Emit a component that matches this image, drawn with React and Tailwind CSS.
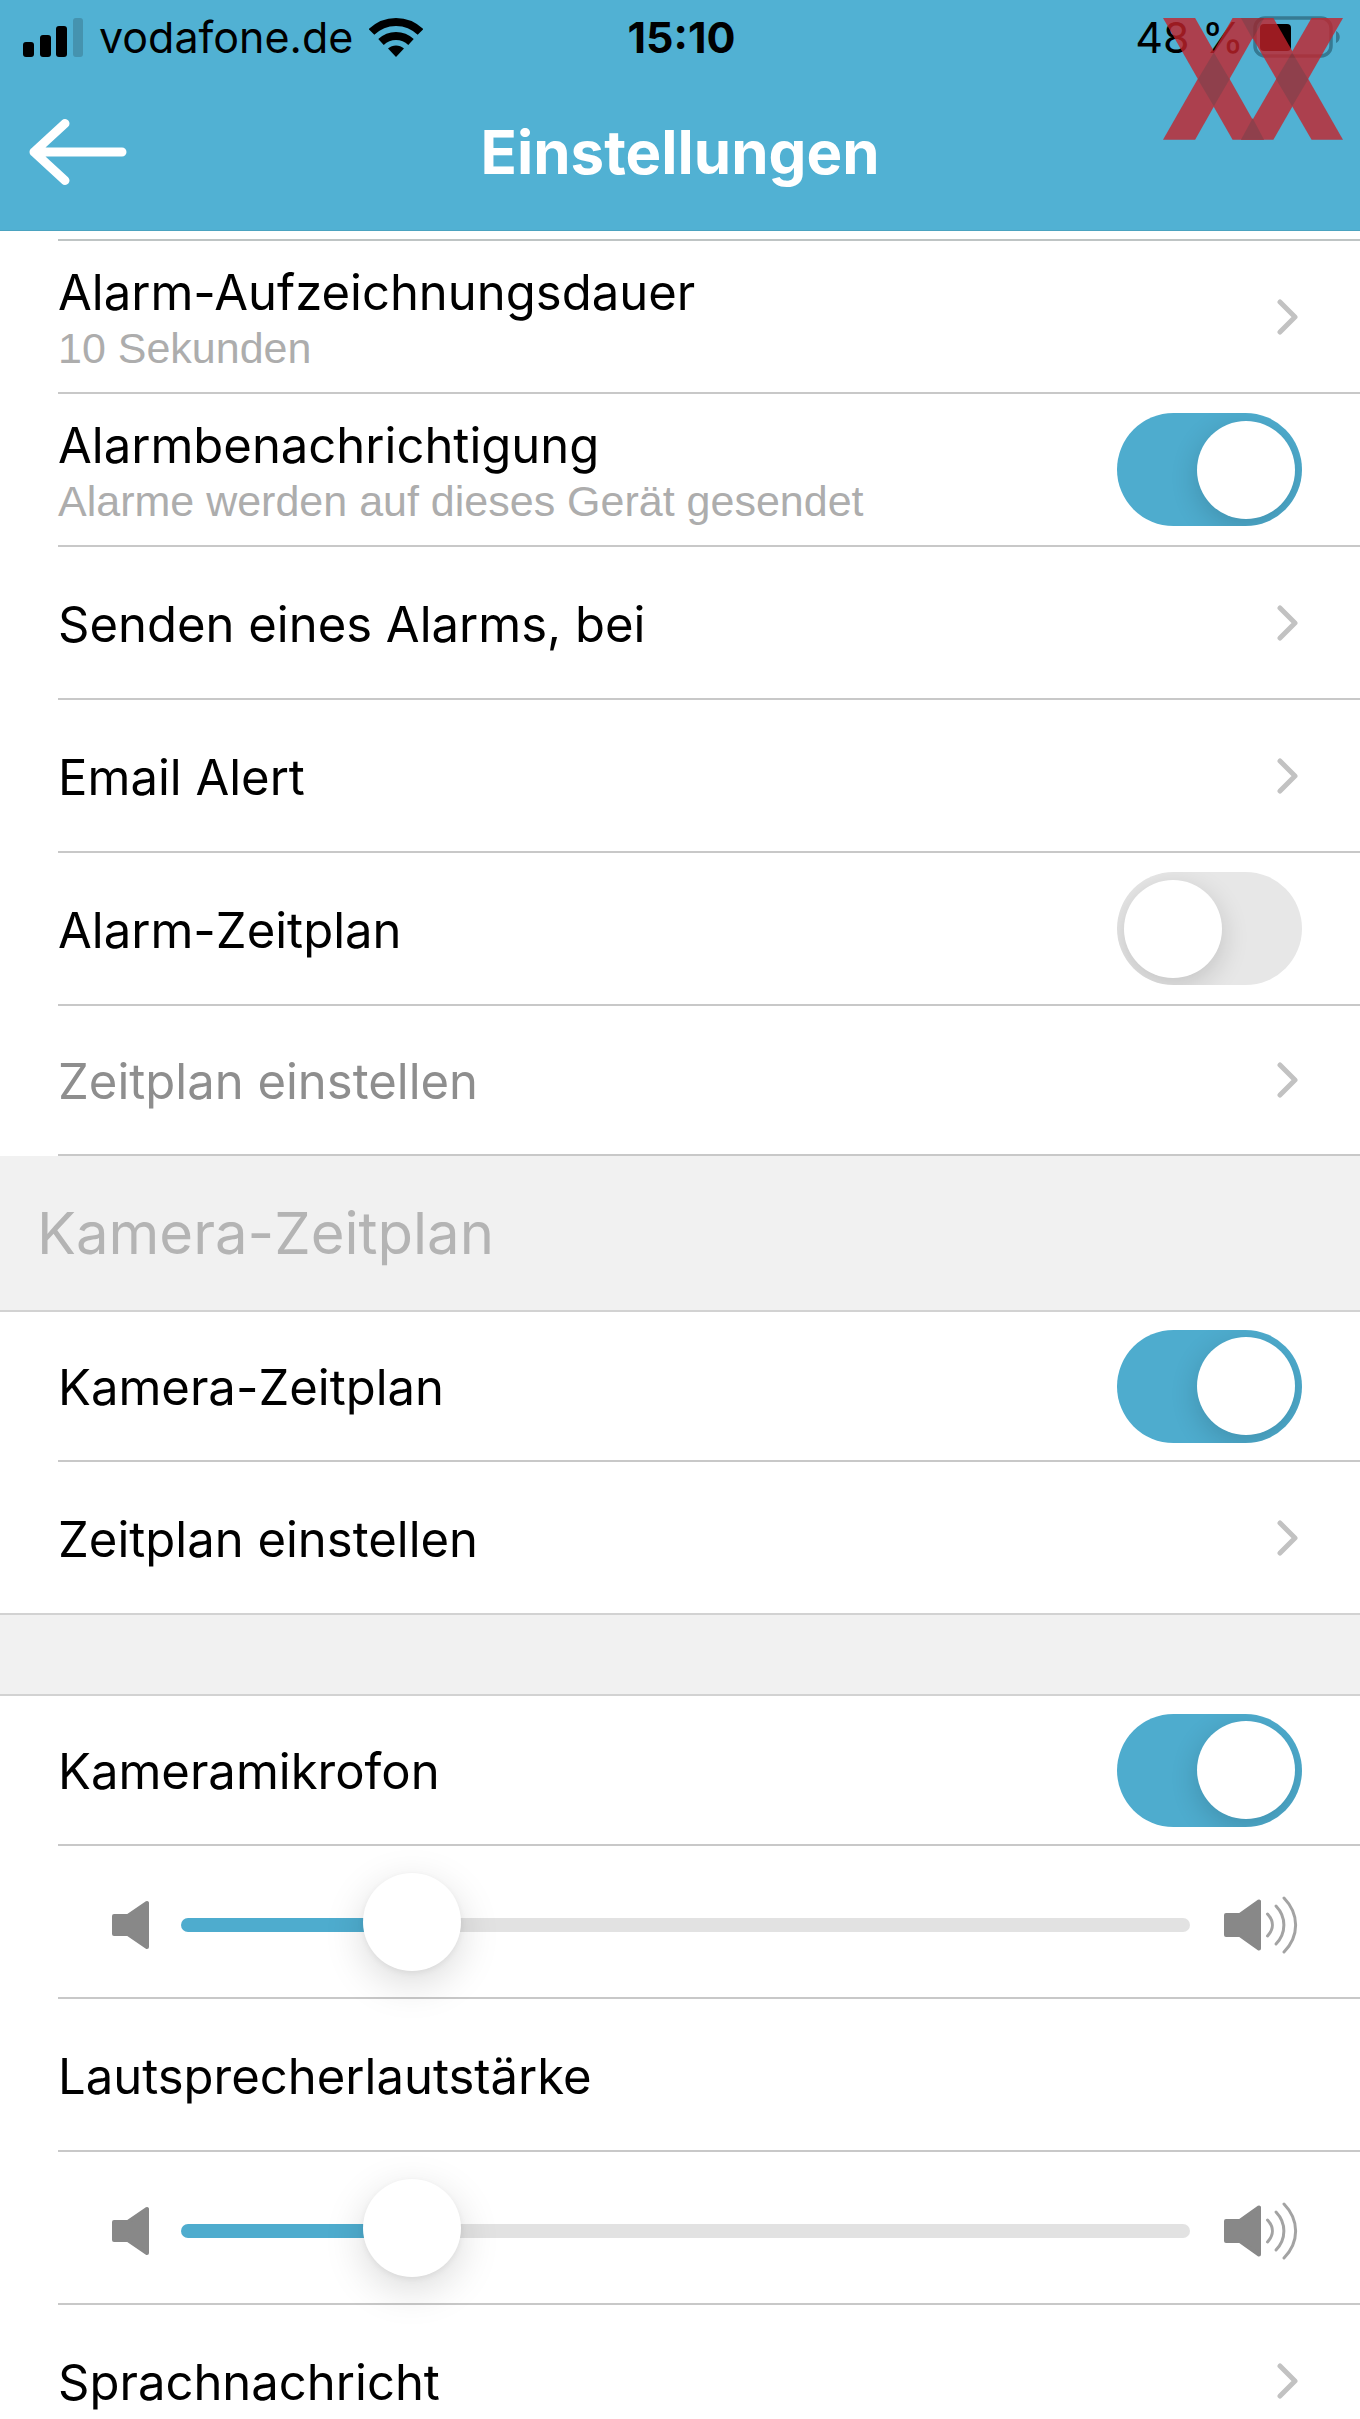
import React, { useState } from 'react'

const SignalBars = () => (
  <svg width="60" height="39" viewBox="0 0 60 39" aria-hidden="true">
    <rect x="0" y="24" width="11" height="15" rx="3" />
    <rect x="17" y="17" width="11" height="22" rx="3" />
    <rect x="33" y="8" width="11" height="31" rx="3" />
    <rect x="50" y="0" width="10" height="39" rx="3" fill="#4593af" />
  </svg>
)

const WifiIcon = () => (
  <svg width="54" height="40" viewBox="0 0 54 40" fill="none" stroke="#000" aria-hidden="true">
    <path d="M2.5 15 C16 1.500 38 1.500 51.500 15" strokeWidth="8" />
    <path d="M12 25 C20.500 17 33.500 17 42 25" strokeWidth="8" />
    <path d="M27 40 L19 31.500 C23.500 27.500 30.500 27.500 35 31.500 Z" fill="#000" stroke="none" />
  </svg>
)

const BatteryIcon = () => (
  <svg width="87" height="42" viewBox="0 0 87 42" aria-hidden="true">
    <rect x="2" y="2" width="76" height="38" rx="10" fill="none" stroke="#367a93" strokeWidth="3.500" />
    <rect x="7" y="8" width="31" height="27" rx="4" />
    <path d="M83 15 C88 17 88 25 83 27 Z" fill="#367a93" />
  </svg>
)

const Logo = () => (
  <svg className="w-[180px]" viewBox="190 54 538 364" aria-hidden="true">
    <g opacity="0.79">
      <g fill="#c5232b">
        <path d="M190 54H286L492 418H398Z" />
        <path d="M398 54H492L286 418H190Z" />
        <path d="M423 54H520L728 418H634Z" />
        <path d="M634 54H728L520 418H423Z" />
      </g>
      <g fill="#a02329">
        <path d="M342 157L389 237L342 318L294 237Z" />
        <path d="M576 157L624 237L576 318L528 237Z" />
        <path d="M458 354L492 418H423Z" />
        <path d="M423 54H492L458 117Z" />
      </g>
    </g>
  </svg>
)

const BackArrow = () => (
  <svg width="98" height="66" viewBox="0 0 98 66" fill="none" stroke="#fff" strokeWidth="9" strokeLinecap="round" strokeLinejoin="round" aria-hidden="true">
    <path d="M36 4.500L5 33L36 61.500M5 33H93" />
  </svg>
)

const Chevron = () => (
  <svg width="21" height="36" viewBox="0 0 21 36" fill="none" stroke="#c2c2c2" strokeWidth="5" strokeLinecap="round" strokeLinejoin="round" aria-hidden="true">
    <path d="M3 3L18 18L3 33" />
  </svg>
)

const SpeakerLow = () => (
  <svg width="38" height="50" viewBox="0 0 38 50" fill="#888" stroke="#888" strokeWidth="4" strokeLinejoin="round" aria-hidden="true">
    <path d="M2 16H16L35 3V47L16 34H2Z" />
  </svg>
)

const SpeakerHigh = () => (
  <svg width="74" height="58" viewBox="0 0 74 58" fill="none" stroke="#a3a3a3" strokeWidth="3" strokeLinecap="round" aria-hidden="true">
    <path d="M2 19H16L35 5.500V52.500L16 39H2Z" fill="#888" stroke="#888" strokeWidth="4" strokeLinejoin="round" />
    <path d="M43.500 18C50 25 50 33 43.500 40" />
    <path d="M52 10C62.500 21 62.500 37 52 48" />
    <path d="M60 2C75.500 18 75.500 40 60 56" />
  </svg>
)

const Labels = ({ title, subtitle, muted, id }) => (
  <span className={subtitle ? 'flex flex-col pt-2' : 'flex flex-col pt-1'}>
    <span id={id} className={muted ? 'text-[49px] leading-[54px] text-[#8e8e8e]' : 'text-[49px] leading-[54px]'}>{title}</span>
    {subtitle && (
      <span className="font-['Liberation_Sans',Arial,sans-serif] text-[43px] leading-[56px] text-[#adadad]">{subtitle}</span>
    )}
  </span>
)

const LinkRow = ({ title, subtitle, muted }) => (
  <button type="button" className="flex h-full w-full items-center justify-between pr-[62px] text-left">
    <Labels title={title} subtitle={subtitle} muted={muted} />
    <Chevron />
  </button>
)

const SwitchRow = ({ title, subtitle, initial, id }) => {
  const [on, setOn] = useState(initial)

  return (
    <label className="flex h-full w-full items-center justify-between pr-[58px]">
      <Labels title={title} subtitle={subtitle} id={id} />
      <input
        type="checkbox"
        role="switch"
        checked={on}
        onChange={(e) => setOn(e.target.checked)}
        className="flex h-[113px] w-[185px] shrink-0 appearance-none items-center overflow-hidden rounded-full bg-[#e7e7e7] px-[7px] before:h-[98px] before:w-[98px] before:rounded-full before:bg-white before:shadow-[0_8px_28px_rgba(0,0,0,0.16)] checked:justify-end checked:bg-[#4eacce]"
      />
    </label>
  )
}

const VolumeRow = ({ labelledBy, initial }) => {
  const [value, setValue] = useState(initial)

  return (
    <div className="flex h-full items-center pt-1.5 pr-[62px] pl-[54px]">
      <SpeakerLow />
      <input
        type="range"
        min="0"
        max="100"
        aria-labelledby={labelledBy}
        value={value}
        onChange={(e) => setValue(Number(e.target.value))}
        style={{ '--fill': `${value}%` }}
        className="relative mr-[34px] ml-[31px] h-[98px] min-w-0 flex-1 appearance-none bg-transparent [&::-webkit-slider-runnable-track]:h-[14px] [&::-webkit-slider-runnable-track]:rounded-full [&::-webkit-slider-runnable-track]:bg-[linear-gradient(to_right,#4eacce_var(--fill),#e2e2e2_var(--fill))] [&::-webkit-slider-thumb]:mt-[-45px] [&::-webkit-slider-thumb]:h-[98px] [&::-webkit-slider-thumb]:w-[98px] [&::-webkit-slider-thumb]:appearance-none [&::-webkit-slider-thumb]:rounded-full [&::-webkit-slider-thumb]:bg-white [&::-webkit-slider-thumb]:shadow-[0_12px_40px_rgba(0,0,0,0.15),0_2px_6px_rgba(0,0,0,0.06)]"
      />
      <SpeakerHigh />
    </div>
  )
}

// edge rows sit next to a grey band and are a little lower than the others
const Row = ({ edge, last, children }) => (
  <li className={`${edge ? 'h-[150px]' : 'h-[153px]'} ${last ? 'border-b-2 border-[#d2d2d2] pl-[58px]' : 'ml-[58px] border-b-2 border-[#c8c8c8]'}`}>
    {children}
  </li>
)

export default function App() {
  return (
    <div className="flex h-screen flex-col overflow-hidden bg-white font-['Inter',sans-serif] text-black">
      <header className="relative shrink-0 border-b border-[#4ba3c0] bg-[#51b1d3]">
        <div className="grid h-[74px] grid-cols-3 items-center pr-5 pl-[23px] text-[43px] leading-[50px]">
          <div className="flex items-center">
            <SignalBars />
            <span className="mr-4 ml-4">vodafone.de</span>
            <WifiIcon />
          </div>
          <time className="text-center font-bold">15:10</time>
          <div className="flex items-center justify-end gap-[9px]">
            <span>48 %</span>
            <BatteryIcon />
          </div>
        </div>
        <div className="grid h-[156px] grid-cols-[1fr_auto_1fr] items-center px-[29px]">
          <button type="button" aria-label="Zurück" className="justify-self-start">
            <BackArrow />
          </button>
          <h1 className="text-[60px] leading-[72px] font-bold text-white">Einstellungen</h1>
        </div>
        <div className="pointer-events-none absolute top-[18px] right-[17px]">
          <Logo />
        </div>
      </header>

      <main className="min-h-0 flex-1 overflow-hidden">
        <div className="ml-[58px] h-[10px] border-b-2 border-[#bfc4c4]" />
        <ul>
          <Row><LinkRow title="Alarm-Aufzeichnungsdauer" subtitle="10 Sekunden" /></Row>
          <Row><SwitchRow title="Alarmbenachrichtigung" subtitle="Alarme werden auf dieses Gerät gesendet" initial={true} /></Row>
          <Row><LinkRow title="Senden eines Alarms, bei" /></Row>
          <Row><LinkRow title="Email Alert" /></Row>
          <Row><SwitchRow title="Alarm-Zeitplan" initial={false} /></Row>
          <Row edge><LinkRow title="Zeitplan einstellen" muted /></Row>
        </ul>

        <h2 className="flex h-[156px] items-center border-b-2 border-[#d2d2d2] bg-[#f1f1f1] px-[37px] text-[58px] leading-[72px] text-[#b4b4b4]">
          Kamera-Zeitplan
        </h2>
        <ul>
          <Row edge><SwitchRow title="Kamera-Zeitplan" initial={true} /></Row>
          <Row last><LinkRow title="Zeitplan einstellen" /></Row>
        </ul>

        <div className="h-[81px] border-b-2 border-[#d2d2d2] bg-[#f1f1f1]" />
        <ul>
          <Row edge><SwitchRow id="microphone" title="Kameramikrofon" initial={true} /></Row>
          <Row><VolumeRow labelledBy="microphone" initial={20} /></Row>
          <Row>
            <div className="flex h-full items-center">
              <Labels id="speaker" title="Lautsprecherlautstärke" />
            </div>
          </Row>
          <Row><VolumeRow labelledBy="speaker" initial={20} /></Row>
          <Row><LinkRow title="Sprachnachricht" /></Row>
        </ul>
      </main>
    </div>
  )
}
